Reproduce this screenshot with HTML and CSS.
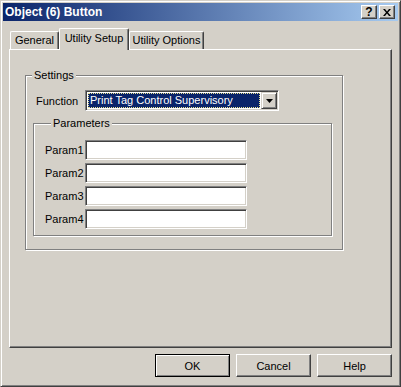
FILE: index.html
```html
<!DOCTYPE html>
<html lang="en">
<head>
  <meta charset="UTF-8" />
  <title>Object (6) Button</title>
  <link rel="stylesheet" href="styles.css">
</head>
<body>
  <div class="window">
    <!-- Caption bar -->
    <div class="titlebar">
      <span class="title">Object (6) Button</span>
      <span class="caption-btn help-btn">?</span>
      <span class="caption-btn">
        <svg width="8" height="7" viewBox="0 0 8 7"><path d="M0 0h2l2 2.5 2-2.5h2l-3 3.5 3 3.5h-2l-2-2.5-2 2.5h-2l3-3.5z" fill="#000"/></svg>
      </span>
    </div>

    <!-- Tabs -->
    <div class="tabs">
      <div class="tab tab-general">General</div>
      <div class="tab tab-setup active">Utility Setup</div>
      <div class="tab tab-options">Utility Options</div>
    </div>

    <div class="panel">
      <div class="group settings">
        <div class="legend">Settings</div>
        <div class="function-row">
          <span class="function-label">Function</span>
          <div class="combo">
            <div class="combo-value">Print Tag Control Supervisory</div>
            <div class="combo-btn">
              <svg width="7" height="4" viewBox="0 0 7 4"><path d="M0 0h7L3.5 4z" fill="#000"/></svg>
            </div>
          </div>
        </div>

        <div class="group params">
          <div class="legend">Parameters</div>
          <div class="param-rows">
            <div class="param-row"><span class="param-label">Param1</span><div class="field"></div></div>
            <div class="param-row"><span class="param-label">Param2</span><div class="field"></div></div>
            <div class="param-row"><span class="param-label">Param3</span><div class="field"></div></div>
            <div class="param-row"><span class="param-label">Param4</span><div class="field"></div></div>
          </div>
        </div>
      </div>
    </div>

    <!-- Dialog buttons -->
    <div class="actions">
      <button class="btn default">OK</button>
      <button class="btn">Cancel</button>
      <button class="btn">Help</button>
    </div>
  </div>
</body>
</html>
```

FILE: styles.css
```css
body {
  margin: 0;
  font-family: "Liberation Sans", Arial, sans-serif;
  font-size: 11px;
  color: #000;
  background: #d4d0c8;
}
.window {
  width: 401px;
  height: 387px;
  box-sizing: border-box;
  background: #d4d0c8;
  border: 1px solid;
  border-color: #d4d0c8 #404040 #404040 #d4d0c8;
  box-shadow: inset 1px 1px #fff, inset -1px -1px #808080;
  padding: 2px;
}
.titlebar {
  height: 18px;
  display: flex;
  align-items: center;
  background: linear-gradient(to right, #0a246a, #a6caf0);
  color: #fff;
  font-weight: bold;
  padding: 0 3px 0 2px;
}
.title {
  flex: 1;
  font-size: 12px;
  line-height: 18px;
}
.caption-btn {
  width: 16px;
  height: 14px;
  box-sizing: border-box;
  background: #d4d0c8;
  border: 1px solid;
  border-color: #fff #404040 #404040 #fff;
  box-shadow: inset -1px -1px #808080;
  display: flex;
  align-items: center;
  justify-content: center;
  color: #000;
  font-size: 12px;
  line-height: 12px;
}
.caption-btn + .caption-btn {
  margin-left: 2px;
}

.tabs {
  display: flex;
  align-items: flex-end;
  height: 21px;
  margin: 7px 0 0 7px;
}
.tab {
  height: 18px;
  box-sizing: border-box;
  border-top: 1px solid #fff;
  border-left: 1px solid #fff;
  border-right: 1px solid #404040;
  box-shadow: inset -1px 0 #808080;
  border-radius: 2px 2px 0 0;
  text-align: center;
  line-height: 17px;
}
.tab.active {
  height: 22px;
  margin-bottom: -1px;
  position: relative;
  z-index: 1;
  background: #d4d0c8;
  line-height: 19px;
}
.tab-general { width: 49px; }
.tab-setup { width: 70px; }
.tab-options { width: 75px; }

.panel {
  margin-left: 6px;
  width: 383px;
  height: 299px;
  box-sizing: border-box;
  border: 1px solid;
  border-color: #fff #404040 #404040 #fff;
  box-shadow: inset -1px -1px #808080;
  padding: 25px 0 0 15px;
}
.group {
  border: 1px solid #808080;
  box-shadow: inset 1px 1px #fff, 1px 1px #fff;
  box-sizing: border-box;
}
.legend {
  width: fit-content;
  margin: -7px 0 0 6px;
  padding: 0 2px;
  background: #d4d0c8;
  line-height: 13px;
}
.settings {
  width: 318px;
  padding: 0 0 13px 0;
}
.function-row {
  display: flex;
  align-items: center;
  margin: 8px 0 0 10px;
}
.function-label {
  width: 49px;
}
.combo {
  width: 194px;
  height: 21px;
  box-sizing: border-box;
  display: flex;
  background: #fff;
  border: 1px solid;
  border-color: #808080 #fff #fff #808080;
  box-shadow: inset 1px 1px #404040, inset -1px -1px #d4d0c8;
  padding: 1px;
}
.combo-value {
  flex: 1;
  margin: 1px;
  background: #0a246a;
  color: #fff;
  outline: 1px dotted #e8e090;
  outline-offset: -1px;
  padding-left: 2px;
  line-height: 15px;
  white-space: nowrap;
}
.combo-btn {
  width: 16px;
  height: 17px;
  box-sizing: border-box;
  background: #d4d0c8;
  border: 1px solid;
  border-color: #d4d0c8 #404040 #404040 #d4d0c8;
  box-shadow: inset 1px 1px #fff, inset -1px -1px #808080;
  display: flex;
  align-items: center;
  justify-content: center;
}
.params {
  margin: 12px 0 0 7px;
  width: 299px;
  padding: 0 0 6px 11px;
}
.param-rows {
  display: flex;
  flex-direction: column;
  gap: 3px;
  margin-top: 10px;
}
.param-row {
  display: flex;
  align-items: center;
}
.param-label {
  width: 40px;
}
.field {
  width: 162px;
  height: 20px;
  box-sizing: border-box;
  background: #fff;
  border: 1px solid;
  border-color: #808080 #fff #fff #808080;
  box-shadow: inset 1px 1px #404040, inset -1px -1px #d4d0c8;
}

.actions {
  display: flex;
  justify-content: flex-end;
  gap: 6px;
  margin: 6px 6px 0 0;
}
.btn {
  width: 75px;
  height: 23px;
  box-sizing: border-box;
  background: #d4d0c8;
  border: 1px solid;
  border-color: #fff #404040 #404040 #fff;
  box-shadow: inset -1px -1px #808080;
  font: inherit;
  color: #000;
  padding: 0;
}
.btn.default {
  border-color: #000;
  box-shadow: inset 1px 1px #fff, inset -1px -1px #808080;
}
```
